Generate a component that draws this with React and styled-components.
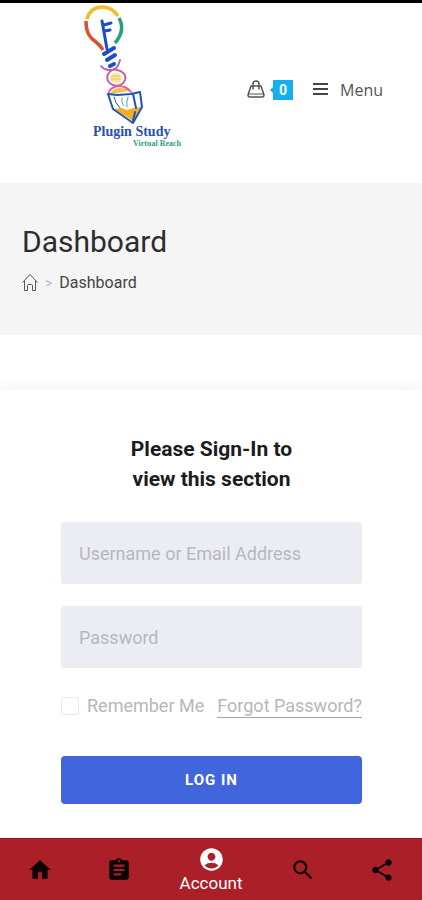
import React from 'react';
import styled, { createGlobalStyle } from 'styled-components';
import { MdHome, MdAssignment, MdAccountCircle, MdSearch, MdShare } from 'react-icons/md';

const GlobalStyle = createGlobalStyle`
  *, *::before, *::after { box-sizing: border-box; }
  body { margin: 0; background: #fff; font-family: Roboto, sans-serif; }
  a { color: inherit; text-decoration: none; }
  button, input { font-family: inherit; }
`;

const Page = styled.div`
  min-height: 100vh;
  display: flex;
  flex-direction: column;
  border-top: 3px solid #000;
`;

const Header = styled.header`
  height: 180px;
  display: flex;
  justify-content: space-between;
  align-items: flex-start;
  padding: 0 39px 0 83px;
`;

const Brand = styled.a`
  display: flex;
  flex-direction: column;
  width: 98px;
  font-family: "Liberation Serif", serif;
  font-weight: 700;
`;

const BrandName = styled.span`
  margin-left: 10px;
  font-size: 14px;
  line-height: 16px;
  color: #2850b4;
  white-space: nowrap;
`;

const BrandTag = styled.span`
  align-self: flex-end;
  font-size: 8px;
  line-height: 8px;
  color: #2f9f83;
  white-space: nowrap;
`;

const HeaderTools = styled.nav`
  display: flex;
  align-items: center;
  gap: 20px;
  margin-top: 74px;
  height: 26px;
`;

const CartLink = styled.a`
  display: flex;
  align-items: center;
  gap: 8px;
`;

const CartCount = styled.span`
  position: relative;
  width: 20px;
  background: #13aff0;
  color: #fff;
  font-size: 14px;
  font-weight: 700;
  line-height: 20px;
  text-align: center;

  &::before {
    content: "";
    position: absolute;
    left: -3px;
    top: 7px;
    border: solid transparent;
    border-width: 3px 3px 3px 0;
    border-right-color: #13aff0;
  }
`;

const MenuButton = styled.button`
  display: flex;
  align-items: center;
  gap: 12px;
  padding: 0;
  border: 0;
  background: none;
  color: #555;
  font-family: "Open Sans", sans-serif;
  font-size: 16px;
  line-height: 24px;
`;

const Banner = styled.section`
  padding: 40px 22px;
  height: 152px;
  background: #f5f5f5;
`;

const PageTitle = styled.h1`
  margin: 0 0 10px;
  font-size: 30px;
  font-weight: 400;
  line-height: 38px;
  color: #2d2d2d;
`;

const Breadcrumbs = styled.nav`
  display: flex;
  align-items: center;
  gap: 7px;
  font-size: 16px;
  line-height: 24px;
  color: #444;

  svg { display: block; }
`;

const Separator = styled.span`
  color: #bbb;
  font-size: 14px;
`;

const Card = styled.main`
  flex: 1;
  margin-top: 55px;
  padding: 44px 60px 34px 61px;
  background: #fff;
  box-shadow: 0 0 16px rgba(0, 0, 0, 0.07);
`;

const FormTitle = styled.h2`
  max-width: 200px;
  margin: 0 auto 28px;
  font-size: 21px;
  font-weight: 700;
  line-height: 30px;
  text-align: center;
  color: #1c1c1c;
`;

const Form = styled.form`
  display: flex;
  flex-direction: column;
  gap: 22px;
`;

const Field = styled.input`
  width: 100%;
  height: 62px;
  padding: 0 18px;
  border: 0;
  border-radius: 3px;
  background: #ecedf2;
  color: #444;
  font-size: 18px;

  &::placeholder { color: #b5b7c5; opacity: 1; }
`;

const Options = styled.div`
  display: flex;
  justify-content: space-between;
  align-items: center;
  height: 32px;
  color: #b5b7bb;
  font-size: 18px;
  line-height: 22px;
  white-space: nowrap;
`;

const Remember = styled.label`
  display: flex;
  align-items: center;
  gap: 8px;
`;

const Checkbox = styled.input`
  appearance: none;
  width: 18px;
  height: 18px;
  margin: 0;
  border: 1px solid #e9e9eb;
  border-radius: 2px;
  background: #fff;

  &:checked { background: #4065dc; }
`;

const ForgotLink = styled.a`
  border-bottom: 1px solid #a4a6aa;
`;

const Submit = styled.button`
  height: 48px;
  margin-top: 12px;
  border: 0;
  border-radius: 4px;
  background: #4065dc;
  color: #fff;
  font-size: 15px;
  font-weight: 700;
  letter-spacing: 1px;
`;

const TabBar = styled.nav`
  position: sticky;
  bottom: 0;
  display: grid;
  grid-template-columns: 3fr 3fr 4fr 3fr 3fr;
  height: 62px;
  background: #ab2028;
  border-top: 1px solid #8f1c24;
`;

const Tab = styled.a`
  display: flex;
  flex-direction: column;
  align-items: center;
  justify-content: center;
  color: ${({ $active }) => ($active ? '#fff' : '#0b0304')};
  font-size: 17px;
  line-height: 20px;

  svg { display: block; }
`;

function LogoArt() {
  return (
    <svg width="98" height="121" viewBox="83 3 98 121" fill="none" strokeLinecap="round" strokeLinejoin="round" aria-hidden="true">
      <g strokeWidth="3.500" strokeLinecap="butt">
        <path d="M87 19C89 11 95 7 102 7c7 0 12 3 16 9" stroke="#f3b92b" />
        <path d="M86 21c0 12 4 17 10 21 3 3 5 4 7 8" stroke="#d9512f" />
        <path d="M119 18c5 9 2 18-4 25" stroke="#25a17d" />
      </g>
      <g stroke="#1c4fc4" strokeWidth="3">
        <path d="M102 21l5 28M104 25l7-2M105 31l5-1" />
        <path d="M104 54l10-6M107 60l8-5M110 66l4-2" strokeWidth="4" />
      </g>
      <ellipse cx="116" cy="78" rx="6" ry="5" fill="#fbe4a0" />
      <path d="M112 76h8M111 79h9" stroke="#f2c65a" strokeWidth="1" />
      <g stroke="#bc63a9" strokeWidth="2">
        <path d="M101 66c4 5 11 5 15 2 3-2 3-5 4-8" />
        <path d="M112 70c-7 5-6 12 1 15 3 1 6 1 9-1 6-5 4-12-5-14-2-1-4 0-5 0z" />
      </g>
      <path d="M110 94c3-7 14-8 20-3z" fill="#f5c044" />
      <path d="M118 86c-6 1-9 4-10 8M118 86c6 0 10 2 13 6" stroke="#e2609a" strokeWidth="2" />
      <path d="M114 109l8-1 5 2 7-2 7-1-8 14z" fill="#f3af20" />
      <g stroke="#2553b5" strokeWidth="2">
        <path d="M108 94l5 15 20 14 9-16-2-15-9 2-14 1z" />
        <path d="M133 94l3 14M133 121l2-9" />
        <path d="M114 97q1 6 6 11" strokeWidth="1" />
      </g>
      <path d="M122 98q-1 5 2 8M128 97q-2 5-1 10" stroke="#4fa4b6" strokeWidth="1" />
    </svg>
  );
}

function BagIcon() {
  return (
    <svg width="18" height="20" viewBox="0 0 18 20" fill="none" stroke="#555" strokeWidth="1.500" strokeLinejoin="round" strokeLinecap="round" aria-hidden="true">
      <path d="M4 6h10l3 9q0 2-2 2H3q-2 0-2-2z" />
      <path d="M2 14h14" strokeWidth="1" />
      <path d="M6 9V4c0-4 6-4 6 0v5" />
    </svg>
  );
}

function BarsIcon() {
  return (
    <svg width="15" height="14" viewBox="0 0 15 14" stroke="#444" strokeWidth="2" aria-hidden="true">
      <path d="M0 1h15M0 6h15M0 11h15" />
    </svg>
  );
}

function HouseIcon() {
  return (
    <svg width="16" height="18" viewBox="0 0 16 18" fill="none" stroke="#555" strokeWidth="1" strokeLinejoin="round" aria-hidden="true">
      <path d="M.5 8.500L8 .5l7.500 8M2.500 6.500v10h3v-5q0-1 1-1h3q1 0 1 1v5h3v-10" />
    </svg>
  );
}

const tabs = [
  { name: 'Home', Icon: MdHome },
  { name: 'Courses', Icon: MdAssignment },
  { name: 'Account', Icon: MdAccountCircle, active: true },
  { name: 'Search', Icon: MdSearch },
  { name: 'Share', Icon: MdShare },
];

export default function App() {
  return (
    <>
      <GlobalStyle />
      <Page>
        <Header>
          <Brand href="#">
            <LogoArt />
            <BrandName>Plugin Study</BrandName>
            <BrandTag>Virtual Reach</BrandTag>
          </Brand>
          <HeaderTools>
            <CartLink href="#cart" aria-label="Cart">
              <BagIcon />
              <CartCount>0</CartCount>
            </CartLink>
            <MenuButton type="button">
              <BarsIcon />
              Menu
            </MenuButton>
          </HeaderTools>
        </Header>
        <Banner>
          <PageTitle>Dashboard</PageTitle>
          <Breadcrumbs aria-label="Breadcrumb">
            <a href="#home" aria-label="Home"><HouseIcon /></a>
            <Separator>&gt;</Separator>
            <a href="#dashboard">Dashboard</a>
          </Breadcrumbs>
        </Banner>
        <Card>
          <FormTitle>Please Sign-In to view this section</FormTitle>
          <Form onSubmit={(event) => event.preventDefault()}>
            <Field type="text" placeholder="Username or Email Address" aria-label="Username or Email Address" />
            <Field type="password" placeholder="Password" aria-label="Password" />
            <Options>
              <Remember>
                <Checkbox type="checkbox" />
                Remember Me
              </Remember>
              <ForgotLink href="#forgot">Forgot Password?</ForgotLink>
            </Options>
            <Submit type="submit">LOG IN</Submit>
          </Form>
        </Card>
        <TabBar>
          {tabs.map(({ name, Icon, active }) => (
            <Tab key={name} href={`#${name.toLowerCase()}`} aria-label={name} $active={active}>
              <Icon size={active ? 27 : 26} />
              {active && name}
            </Tab>
          ))}
        </TabBar>
      </Page>
    </>
  );
}
